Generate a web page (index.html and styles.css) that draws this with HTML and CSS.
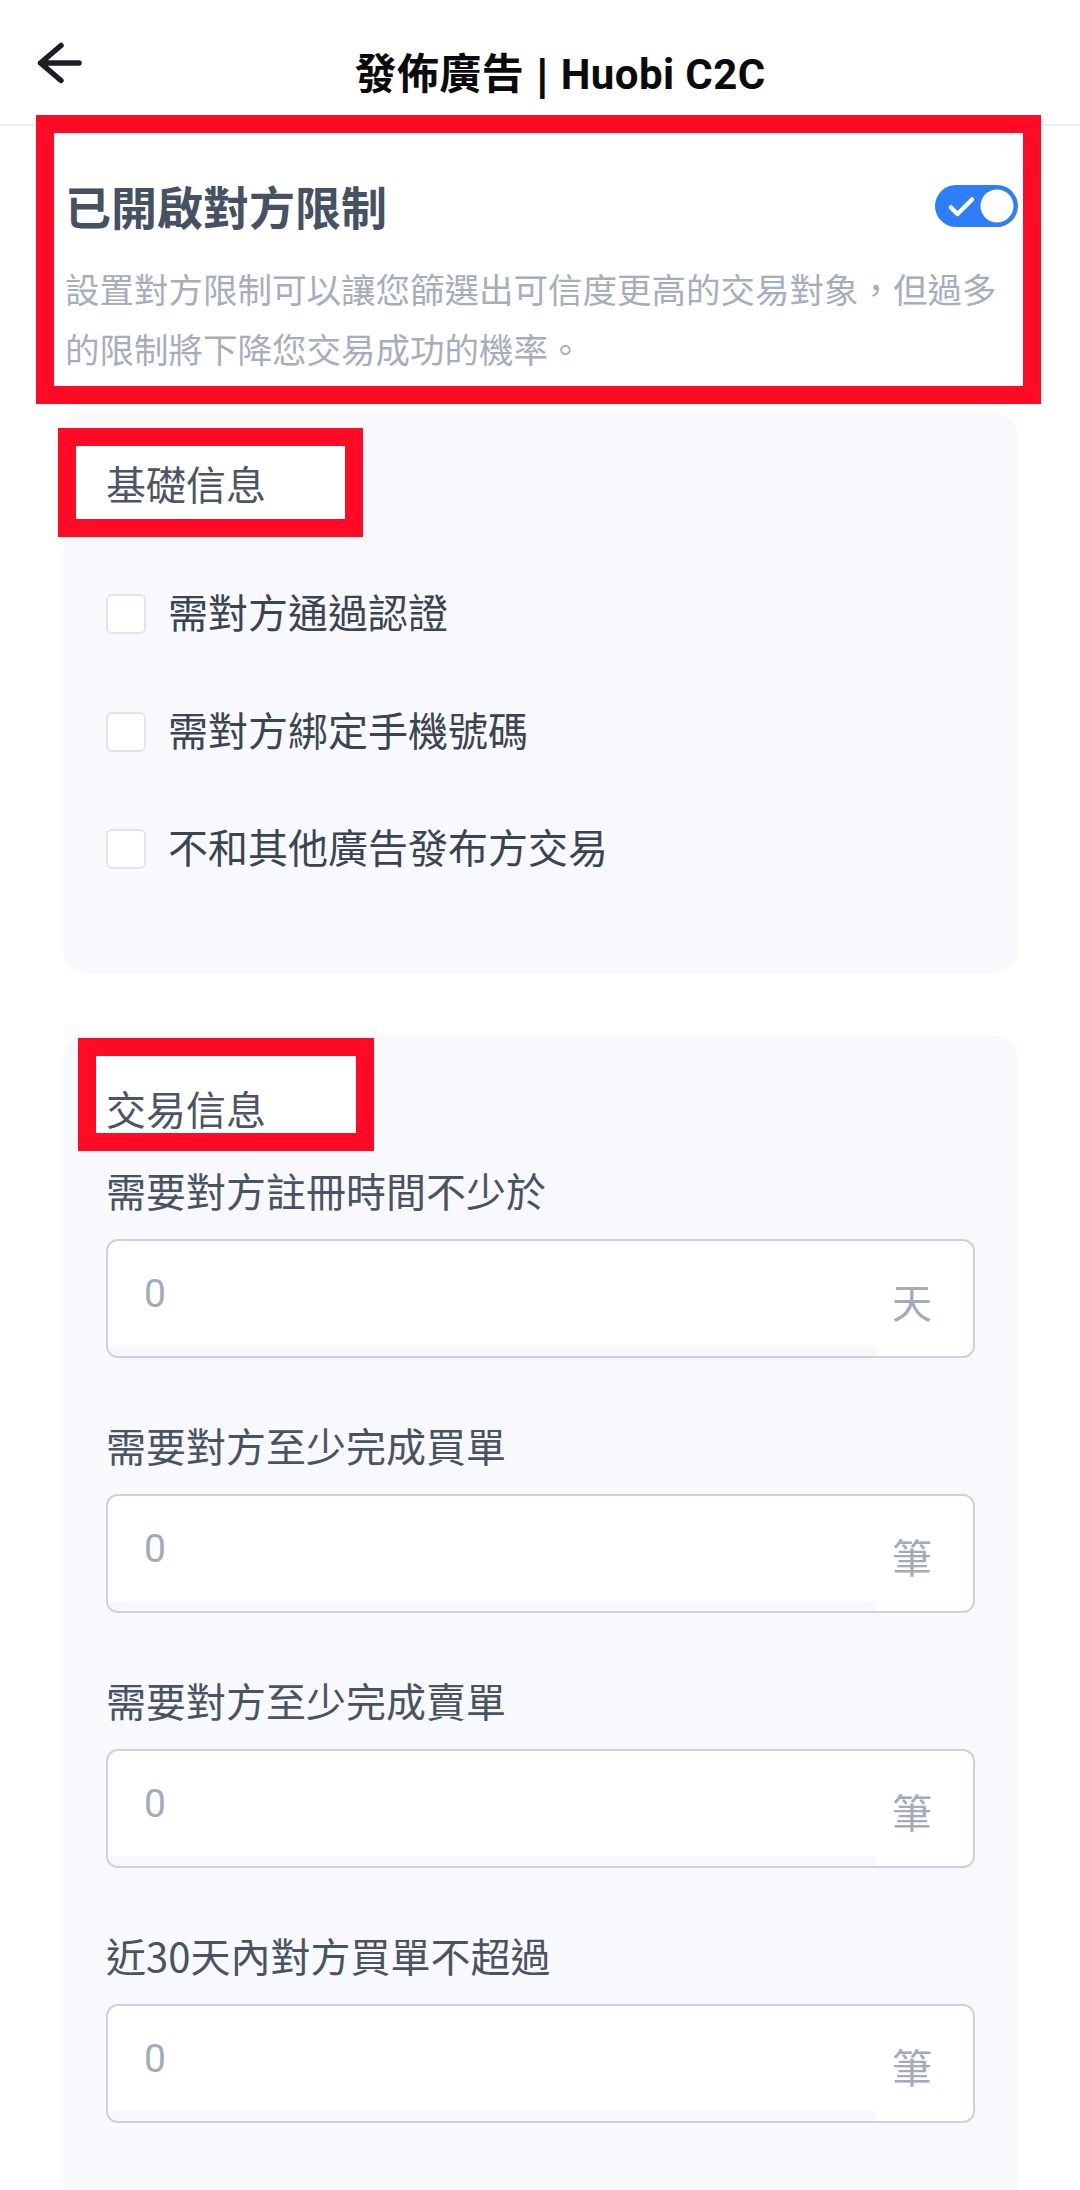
FILE: index.html
```html
<!DOCTYPE html>
<html lang="zh-Hant">
<head>
<meta charset="utf-8">
<title>發佈廣告 | Huobi C2C</title>
<link rel="stylesheet" href="styles.css">
</head>
<body>
<header class="topbar">
  <svg class="back" width="48" height="44" viewBox="0 0 48 44" aria-hidden="true">
    <path d="M43 22H4.5M25 4.5L4.5 22L25 39.5" fill="none" stroke="#1b1e24" stroke-width="5.5" stroke-linecap="round" stroke-linejoin="round"/>
  </svg>
  <h1 class="title">發佈廣告 <span class="sep">|</span> Huobi C2C</h1>
</header>

<main class="page">
  <section class="limit">
    <div class="annot annot-limit"></div>
    <div class="limit-head">
      <h2 class="limit-title">已開啟對方限制</h2>
      <svg class="toggle" width="83" height="42" viewBox="0 0 83 42" aria-hidden="true">
        <rect x="0" y="0" width="83" height="42" rx="21" fill="#2d7ff9"/>
        <circle cx="62" cy="21" r="16.5" fill="#ffffff"/>
        <path d="M16 22.5L22.5 29L37 14.5" fill="none" stroke="#ffffff" stroke-width="4.5" stroke-linecap="round" stroke-linejoin="round"/>
      </svg>
    </div>
    <p class="limit-desc">設置對方限制可以讓您篩選出可信度更高的交易對象，但過多的限制將下降您交易成功的機率。</p>
  </section>

  <section class="card card-basic">
    <div class="annot annot-basic"></div>
    <h3 class="card-title">基礎信息</h3>
    <div class="check-row first"><span class="checkbox"></span><span class="check-text">需對方通過認證</span></div>
    <div class="check-row"><span class="checkbox"></span><span class="check-text">需對方綁定手機號碼</span></div>
    <div class="check-row"><span class="checkbox"></span><span class="check-text">不和其他廣告發布方交易</span></div>
  </section>

  <section class="card card-trade">
    <div class="annot annot-trade"></div>
    <h3 class="card-title">交易信息</h3>
    <div class="field-group first">
      <div class="label">需要對方註冊時間不少於</div>
      <div class="field"><div class="field-input">0</div><div class="field-unit">天</div></div>
    </div>
    <div class="field-group">
      <div class="label">需要對方至少完成買單</div>
      <div class="field"><div class="field-input">0</div><div class="field-unit">筆</div></div>
    </div>
    <div class="field-group">
      <div class="label">需要對方至少完成賣單</div>
      <div class="field"><div class="field-input">0</div><div class="field-unit">筆</div></div>
    </div>
    <div class="field-group">
      <div class="label">近30天內對方買單不超過</div>
      <div class="field"><div class="field-input">0</div><div class="field-unit">筆</div></div>
    </div>
  </section>
</main>
</body>
</html>
```

FILE: styles.css
```css
* {
  box-sizing: border-box;
}

html, body {
  margin: 0;
  padding: 0;
  background: #ffffff;
}

body {
  width: 1080px;
  font-family: "Noto Sans CJK TC", "Noto Sans", sans-serif;
  color: #3b4452;
}

h1, h2, h3, p {
  margin: 0;
  font-weight: normal;
}

/* ---------- top bar ---------- */
.topbar {
  display: flex;
  align-items: flex-start;
  height: 126px;
  padding-left: 36px;
  border-bottom: 2px solid #eceef1;
}

.back {
  display: block;
  flex: none;
  margin-top: 41px;
}

.title {
  flex: 1;
  margin: 47px 44px 0 0;
  text-align: center;
  font-family: "Roboto", "Noto Sans CJK TC", sans-serif;
  font-weight: 700;
  font-size: 42px;
  line-height: 56px;
  color: #0b0b0d;
  letter-spacing: 0.4px;
}

.title .sep {
  font-family: "DejaVu Sans", sans-serif;
  font-weight: 700;
  font-size: 40px;
}

/* ---------- page ---------- */
.page {
  padding: 0 62px 0 63px;
}

.annot {
  position: absolute;
  border: 18px solid #ff0b25;
  z-index: 0;
}

/* ---------- limit section ---------- */
.limit {
  position: relative;
  padding: 49px 0 0 2px;
}

.annot-limit {
  left: -27px;
  top: -11px;
  width: 1005px;
  height: 289px;
}

.limit-head {
  position: relative;
  z-index: 1;
  display: flex;
  align-items: center;
  justify-content: space-between;
  height: 60px;
}

.limit-title {
  font-size: 46px;
  font-weight: 700;
  line-height: 60px;
  color: #465164;
}

.toggle {
  display: block;
  margin-top: 2px;
}

.limit-desc {
  position: relative;
  z-index: 1;
  margin-top: 23px;
  font-size: 34.5px;
  line-height: 60px;
  color: #a6aebb;
}

/* ---------- cards ---------- */
.card {
  position: relative;
  background: #f8f9fc;
  border-radius: 24px;
}

.card-basic {
  margin-top: 34px;
  padding: 43px 43px 99px;
}

.card-trade {
  margin-top: 63px;
  padding: 44px 43px 90px;
}

.card-title {
  position: relative;
  z-index: 1;
  font-size: 40px;
  line-height: 56px;
  color: #4c5565;
}

.annot-basic {
  left: -5px;
  top: 16px;
  width: 305px;
  height: 109px;
  background: #ffffff;
}

.annot-trade {
  left: 15px;
  top: 2px;
  width: 296px;
  height: 113px;
  background: #ffffff;
}

/* ---------- checkbox rows ---------- */
.check-row {
  display: flex;
  align-items: center;
  gap: 22px;
  height: 56px;
  margin-top: 61.5px;
}

.check-row.first {
  margin-top: 72px;
}

.checkbox {
  flex: none;
  width: 40px;
  height: 40px;
  margin-top: 6px;
  background: #ffffff;
  border: 2px solid #e1e4e9;
  border-radius: 6px;
}

.check-text {
  font-size: 40px;
  line-height: 56px;
  color: #3b4452;
}

/* ---------- fields ---------- */
.field-group {
  margin-top: 59px;
}

.field-group.first {
  margin-top: 26px;
}

.label {
  font-size: 40px;
  line-height: 56px;
  color: #4a5362;
}

.field {
  display: flex;
  height: 119px;
  margin-top: 21px;
  background: #ffffff;
  border: 2px solid #cdd2da;
  border-radius: 12px;
  overflow: hidden;
}

.field-input {
  flex: 1;
  display: flex;
  align-items: center;
  padding-left: 36px;
  border-bottom: 10px solid #f7f8fb;
  font-family: "Roboto", "Noto Sans", sans-serif;
  font-size: 39px;
  color: #a2abb9;
}

.field-unit {
  flex: none;
  width: 97px;
  display: flex;
  align-items: center;
  padding: 4px 0 0 16px;
  font-size: 40px;
  color: #a2abb9;
}
```
